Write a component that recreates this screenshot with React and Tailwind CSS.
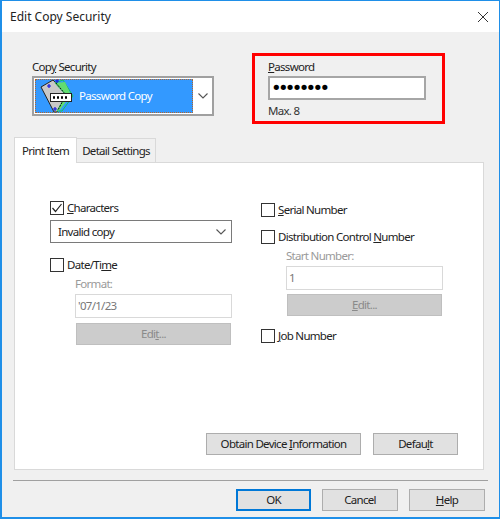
import React from 'react';

const font = { fontFamily: '"Noto Sans", sans-serif', letterSpacing: '-0.7px' };

const Chevron = ({ color = '#555' }) => (
  <svg width="10" height="6" viewBox="0 0 10 6" fill="none">
    <path d="M0.5 0.5 L5 5 L9.5 0.5" stroke={color} strokeWidth="1.1" />
  </svg>
);

const CopyIcon = () => (
  <svg width="34" height="34" viewBox="0 0 34 34" className="shrink-0">
    <path d="M1 8 L13 1 L27 16 L17 33 L14 33 Z" fill="#c8c8c8" stroke="#222" strokeWidth="1" />
    <path d="M15 4 L23 1 L33 17 L22 32 L17 32 L26 16 Z" fill="#3399ff" stroke="#12c45c" strokeWidth="1" />
    <path d="M15 4 L25 3 L31 16 L20 31 L17 32 L26 16 Z" fill="#62dc70" />
    <path d="M16 4 L26 16 L18 31" fill="none" stroke="#111" strokeWidth="1" strokeDasharray="2 1" />
    <path d="M7 7 h4 M9 5 v4 M15 2 h4 M17 0 v4 M13 30 h4 M15 28 v4" stroke="#1414e0" strokeWidth="1.2" />
    <rect x="10.5" y="14.5" width="21" height="8" fill="#fff" stroke="#222" strokeWidth="1" />
    <path d="M13 18.5 h2 M17 18.5 h2 M21 18.5 h2 M25 18.5 h2" stroke="#000" strokeWidth="2.5" />
  </svg>
);

const Check = ({ checked, label }) => (
  <label className="flex items-center gap-[3px] h-[14px] text-[11.5px] text-[#222]">
    <span className="flex items-center justify-center w-[14px] h-[14px] border border-[#333] bg-white shrink-0">
      {checked && (
        <svg width="12" height="12" viewBox="0 0 12 12" fill="none">
          <path d="M1.5 6 L4.5 9.5 L10.5 2" stroke="#222" strokeWidth="1.2" />
        </svg>
      )}
    </span>
    <span>{label}</span>
  </label>
);

const DisabledGroup = ({ title, value, edit, editClass }) => (
  <div className="flex flex-col w-[157px]">
    <span className="text-[11.5px] leading-[16px] text-[#9a9a9a]">{title}</span>
    <div className="mt-[2px] h-[24px] border border-[#d9d9d9] bg-white px-[2px] flex items-center text-[11.5px] text-[#777]">{value}</div>
    <button className={`h-[22px] mx-[1px] border border-[#bfbfbf] bg-[#cccccc] text-[11.5px] text-[#8a8a8a] ${editClass}`}>{edit}</button>
  </div>
);

const Btn = ({ className, children }) => (
  <button className={`h-[22px] border border-[#adadad] bg-[#e1e1e1] text-[11.5px] text-[#222] ${className}`}>{children}</button>
);

export default function App() {
  return (
    <div className="w-[500px] h-[519px] flex flex-col bg-[#f0f0f0] border-t border-l-2 border-r border-b-2 border-[#1f8fe8]" style={font}>
      {/* Title bar */}
      <div className="h-[31px] shrink-0 bg-white flex items-center justify-between pl-[8px] pr-[10px] text-[12px] tracking-normal text-[#222]">
        <span>Edit Copy Security</span>
        <svg width="12" height="12" viewBox="0 0 12 12" fill="none">
          <path d="M1 1 L11 11 M11 1 L1 11" stroke="#333" strokeWidth="1" />
        </svg>
      </div>

      {/* Top row */}
      <div className="flex h-[105px] shrink-0 pl-[30px] pt-[21px]">
        <div className="flex flex-col w-[182px] pt-[6px]">
          <span className="text-[11.5px] leading-[16px] text-[#222]">Cop<u>y</u> Security</span>
          <div className="mt-px h-[40px] border-2 border-[#a0a0a0] bg-white flex items-center">
            <div className="ml-px w-[158px] h-[34px] bg-[#3399ff] outline-1 -outline-offset-1 outline-dotted outline-[#b4642a] flex items-center pl-[5px] gap-[5px] text-[11.5px] text-white">
              <CopyIcon />
              <span>Password Copy</span>
            </div>
            <div className="flex-1 flex justify-center"><Chevron /></div>
          </div>
        </div>
        <div className="ml-[38px] w-[193px] h-[71px] border-[3px] border-[#ff0000] pl-[13px] pt-[3px] flex flex-col">
          <span className="text-[11.5px] leading-[16px] text-[#222]"><u>P</u>assword</span>
          <div className="mt-px w-[158px] h-[24px] border-2 border-[#a6a6a6] bg-white flex items-center pl-[1px] text-[18px] leading-none text-black tracking-[-3.7px]" style={{ fontFamily: '"DejaVu Sans", sans-serif' }}>••••••••</div>
          <span className="mt-[3px] text-[11.5px] leading-[16px] text-[#333]">Max. 8</span>
        </div>
      </div>

      {/* Tabs */}
      <div className="flex items-end h-[25px] shrink-0 ml-[12px] relative z-10">
        <div className="h-[26px] -mb-px w-[63px] border border-b-0 border-[#d9d9d9] bg-white flex items-center justify-center text-[11.5px] text-[#222]">Print Item</div>
        <div className="h-[24px] w-[79px] border border-l-0 border-b-0 border-[#d9d9d9] bg-[#f0f0f0] flex items-center justify-center whitespace-nowrap text-[11.5px] text-[#222]">Detail Settings</div>
      </div>

      {/* Panel */}
      <div className="ml-[12px] mr-[15px] h-[308px] shrink-0 border border-[#d9d9d9] bg-white flex flex-col">
        <div className="flex pl-[35px] pt-[38px] h-[270px]">
          <div className="flex flex-col w-[182px]">
            <Check checked label={<><u>C</u>haracters</>} />
            <div className="mt-[5px] h-[23px] border border-[#7a7a7a] bg-white flex items-center justify-between pl-[7px] pr-[2px] text-[11.5px] text-[#222]">
              <span>Invalid copy</span>
              <span className="w-[16px] flex justify-center"><Chevron /></span>
            </div>
            <div className="mt-[15px]"><Check label={<>Date/Ti<u>m</u>e</>} /></div>
            <div className="ml-[25px] mt-[4px]">
              <DisabledGroup title="Format:" value="'07/1/23" edit={<>Edi<u>t</u>...</>} editClass="mt-[5px]" />
            </div>
          </div>
          <div className="flex flex-col ml-[29px] pt-[2px]">
            <Check label={<><u>S</u>erial Number</>} />
            <div className="mt-[13px]"><Check label={<>Distribution Control <u>N</u>umber</>} /></div>
            <div className="ml-[25px] mt-[4px]">
              <DisabledGroup title="Start Number:" value="1" edit={<><u>E</u>dit...</>} editClass="mt-[4px]" />
            </div>
            <div className="mt-[13px]"><Check label={<><u>J</u>ob Number</>} /></div>
          </div>
        </div>
        <div className="flex pl-[191px] gap-[12px]">
          <Btn className="w-[155px]">Obtain Device <u>I</u>nformation</Btn>
          <Btn className="w-[85px]">Defau<u>l</u>t</Btn>
        </div>
      </div>

      {/* Footer */}
      <div className="mx-[11px] mt-[10px] border-t border-[#a0a0a0]" />
      <div className="flex justify-end gap-[11px] pr-[14px] mt-[8px]">
        <Btn className="w-[75px] !border-2 !border-[#0078d7]">OK</Btn>
        <Btn className="w-[76px]">Cancel</Btn>
        <Btn className="w-[76px]"><u>H</u>elp</Btn>
      </div>
    </div>
  );
}
